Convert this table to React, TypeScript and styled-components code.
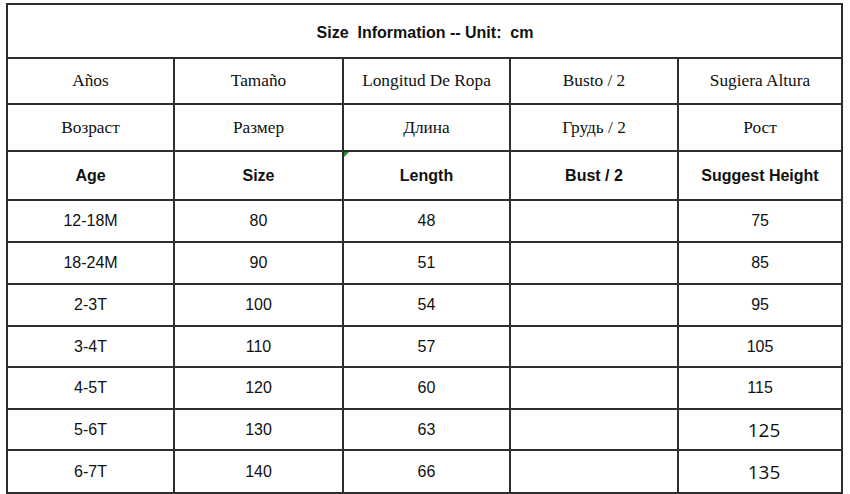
import React from "react";
import styled, { createGlobalStyle } from "styled-components";

const GlobalStyle = createGlobalStyle`
  html, body {
    margin: 0;
    padding: 0;
    background: #ffffff;
    overflow: hidden;
  }
  body {
    width: 850px;
    height: 494px;
  }
`;

const Page = styled.div`
  padding: 3px 0 0 6px;
  height: 494px;
  box-sizing: border-box;
  overflow: hidden;
`;

const Table = styled.table`
  border-collapse: collapse;
  table-layout: fixed;
  width: 835px;
  color: #111111;
`;

const Row = styled.tr<{ $h: number }>`
  height: ${(p) => p.$h}px;
`;

const Cell = styled.td<{ $variant?: "serif" | "bold" | "plain" | "alt" }>`
  border: 2px solid #2e2e2e;
  padding: 0;
  text-align: center;
  vertical-align: middle;
  white-space: pre;
  position: relative;
  font-family: ${(p) =>
    p.$variant === "serif"
      ? '"Liberation Serif", "Times New Roman", serif'
      : p.$variant === "alt"
      ? '"Open Sans", "Noto Sans", sans-serif'
      : '"Liberation Sans", Arial, sans-serif'};
  font-size: ${(p) =>
    p.$variant === "serif" ? "17.3px" : p.$variant === "alt" ? "19px" : "16px"};
  font-weight: ${(p) => (p.$variant === "bold" ? 700 : 400)};
  padding-left: ${(p) => (p.$variant === "alt" ? "8px" : "0")};
`;

const TitleCell = styled.td`
  border: 2px solid #2e2e2e;
  text-align: center;
  vertical-align: middle;
  white-space: pre;
  font-family: "Liberation Sans", Arial, sans-serif;
  font-size: 16px;
  font-weight: 700;
  padding: 3px 0 0 1px;
`;

const Marker = styled.span`
  position: absolute;
  left: 0;
  top: 0;
  width: 0;
  height: 0;
  border-top: 5px solid #1f8a1f;
  border-right: 5px solid transparent;
`;

const widths = [167, 169, 167, 168, 164];

const spanish = ["Años", "Tamaño", "Longitud De Ropa", "Busto / 2", "Sugiera Altura"];
const russian = ["Возраст", "Размер", "Длина", "Грудь / 2", "Рост"];
const english = ["Age", "Size", "Length", "Bust / 2", "Suggest Height"];

type DataRow = { age: string; size: string; length: string; bust: string; height: string; h: number; alt?: boolean };

const data: DataRow[] = [
  { age: "12-18M", size: "80", length: "48", bust: "", height: "75", h: 42 },
  { age: "18-24M", size: "90", length: "51", bust: "", height: "85", h: 42 },
  { age: "2-3T", size: "100", length: "54", bust: "", height: "95", h: 42 },
  { age: "3-4T", size: "110", length: "57", bust: "", height: "105", h: 41 },
  { age: "4-5T", size: "120", length: "60", bust: "", height: "115", h: 42 },
  { age: "5-6T", size: "130", length: "63", bust: "", height: "125", h: 41, alt: true },
  { age: "6-7T", size: "140", length: "66", bust: "", height: "135", h: 43, alt: true },
  { age: "", size: "", length: "", bust: "", height: "", h: 42 },
];

export default function App() {
  return (
    <>
      <GlobalStyle />
      <Page>
        <Table>
          <colgroup>
            {widths.map((w, i) => (
              <col key={i} style={{ width: w }} />
            ))}
          </colgroup>
          <tbody>
            <Row $h={54}>
              <TitleCell colSpan={5}>{"Size  Information -- Unit:  cm"}</TitleCell>
            </Row>
            <Row $h={46}>
              {spanish.map((t) => (
                <Cell key={t} $variant="serif">{t}</Cell>
              ))}
            </Row>
            <Row $h={47}>
              {russian.map((t) => (
                <Cell key={t} $variant="serif">{t}</Cell>
              ))}
            </Row>
            <Row $h={49}>
              {english.map((t, i) => (
                <Cell key={t} $variant="bold">
                  {i === 2 && <Marker />}
                  {t}
                </Cell>
              ))}
            </Row>
            {data.map((r, idx) => (
              <Row key={idx} $h={r.h}>
                <Cell $variant="plain">{r.age}</Cell>
                <Cell $variant="plain">{r.size}</Cell>
                <Cell $variant="plain">{r.length}</Cell>
                <Cell $variant="plain">{r.bust}</Cell>
                <Cell $variant={r.alt ? "alt" : "plain"}>{r.height}</Cell>
              </Row>
            ))}
          </tbody>
        </Table>
      </Page>
    </>
  );
}
